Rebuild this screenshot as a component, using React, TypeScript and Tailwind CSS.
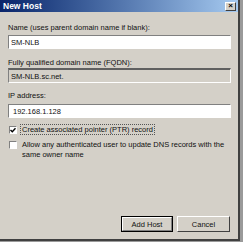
import React from 'react';

const font = { fontFamily: '"Liberation Sans", Arial, sans-serif' };

const App: React.FC = () => {
  return (
    <div className="w-[244px] h-[244px] bg-white overflow-hidden" style={font}>
      {/* Window frame */}
      <div className="w-[243px] h-[242px] bg-[#9a9a9a] flex flex-col">
        <div className="w-[240px] h-[241px] bg-[#d4d0c8] border-r-2 border-b-2 border-[#404040] flex flex-col">
          {/* Title bar */}
          <div className="h-[12px] flex items-center justify-between bg-gradient-to-r from-[#0a246a] to-[#a6caf0] pl-[3px] pr-[2px]">
            <span className="text-white font-bold text-[8.5px] leading-none">New Host</span>
            <div className="w-[11px] h-[9px] bg-[#d4d0c8] border border-t-white border-l-white border-r-[#404040] border-b-[#404040] flex items-center justify-center text-[8px] font-bold leading-none text-black">
              ×
            </div>
          </div>

          {/* Body */}
          <div className="flex-1 flex flex-col px-[8px] pt-[11px] text-[7.5px] leading-[9px] text-[#111]">
            <div>Name (uses parent domain name if blank):</div>
            <div className="mt-[3px] h-[14px] w-[223px] bg-white border border-t-[#808080] border-l-[#808080] border-r-white border-b-white flex items-center pl-[2px]">
              SM-NLB
            </div>

            <div className="mt-[9px]">Fully qualified domain name (FQDN):</div>
            <div className="mt-[1px] h-[15px] w-[223px] bg-[#d4d0c8] border-t-2 border-l border-r border-b border-t-[#606060] border-l-[#808080] border-r-white border-b-white flex items-center pl-[2px]">
              SM-NLB.sc.net.
            </div>

            <div className="mt-[8px]">IP address:</div>
            <div className="mt-[4px] h-[14px] w-[223px] bg-white border border-t-[#808080] border-l-[#808080] border-r-white border-b-white flex items-center pl-[4px]">
              192.168.1.128
            </div>

            <div className="mt-[6px] flex items-center">
              <div className="w-[8px] h-[8px] ml-[1px] bg-white border border-t-[#808080] border-l-[#808080] border-r-white border-b-white flex items-center justify-center">
                <svg width="6" height="6" viewBox="0 0 6 6">
                  <path d="M0.5 3 L2.3 4.8 L5.5 1.2" stroke="#000" strokeWidth="1.4" fill="none" />
                </svg>
              </div>
              <div className="ml-[3px] px-[1px] h-[11px] border border-dotted border-[#555] flex items-center">
                Create associated pointer (PTR) record
              </div>
            </div>

            <div className="mt-[5px] flex items-start">
              <div className="w-[8px] h-[8px] ml-[1px] mt-[1px] shrink-0 bg-white border border-t-[#808080] border-l-[#808080] border-r-white border-b-white" />
              <div className="ml-[5px] leading-[10px]">
                Allow any authenticated user to update DNS records with the same owner name
              </div>
            </div>

            {/* Buttons */}
            <div className="mt-auto mb-[7px] flex justify-end gap-[4px]">
              <div className="w-[52px] h-[16px] border border-black flex">
                <div className="flex-1 border border-t-white border-l-white border-r-[#808080] border-b-[#808080] flex items-center justify-center">
                  Add Host
                </div>
              </div>
              <div className="w-[53px] h-[16px] border border-t-white border-l-white border-r-[#404040] border-b-[#404040] flex items-center justify-center">
                Cancel
              </div>
            </div>
          </div>
        </div>
      </div>
    </div>
  );
};

export default App;
